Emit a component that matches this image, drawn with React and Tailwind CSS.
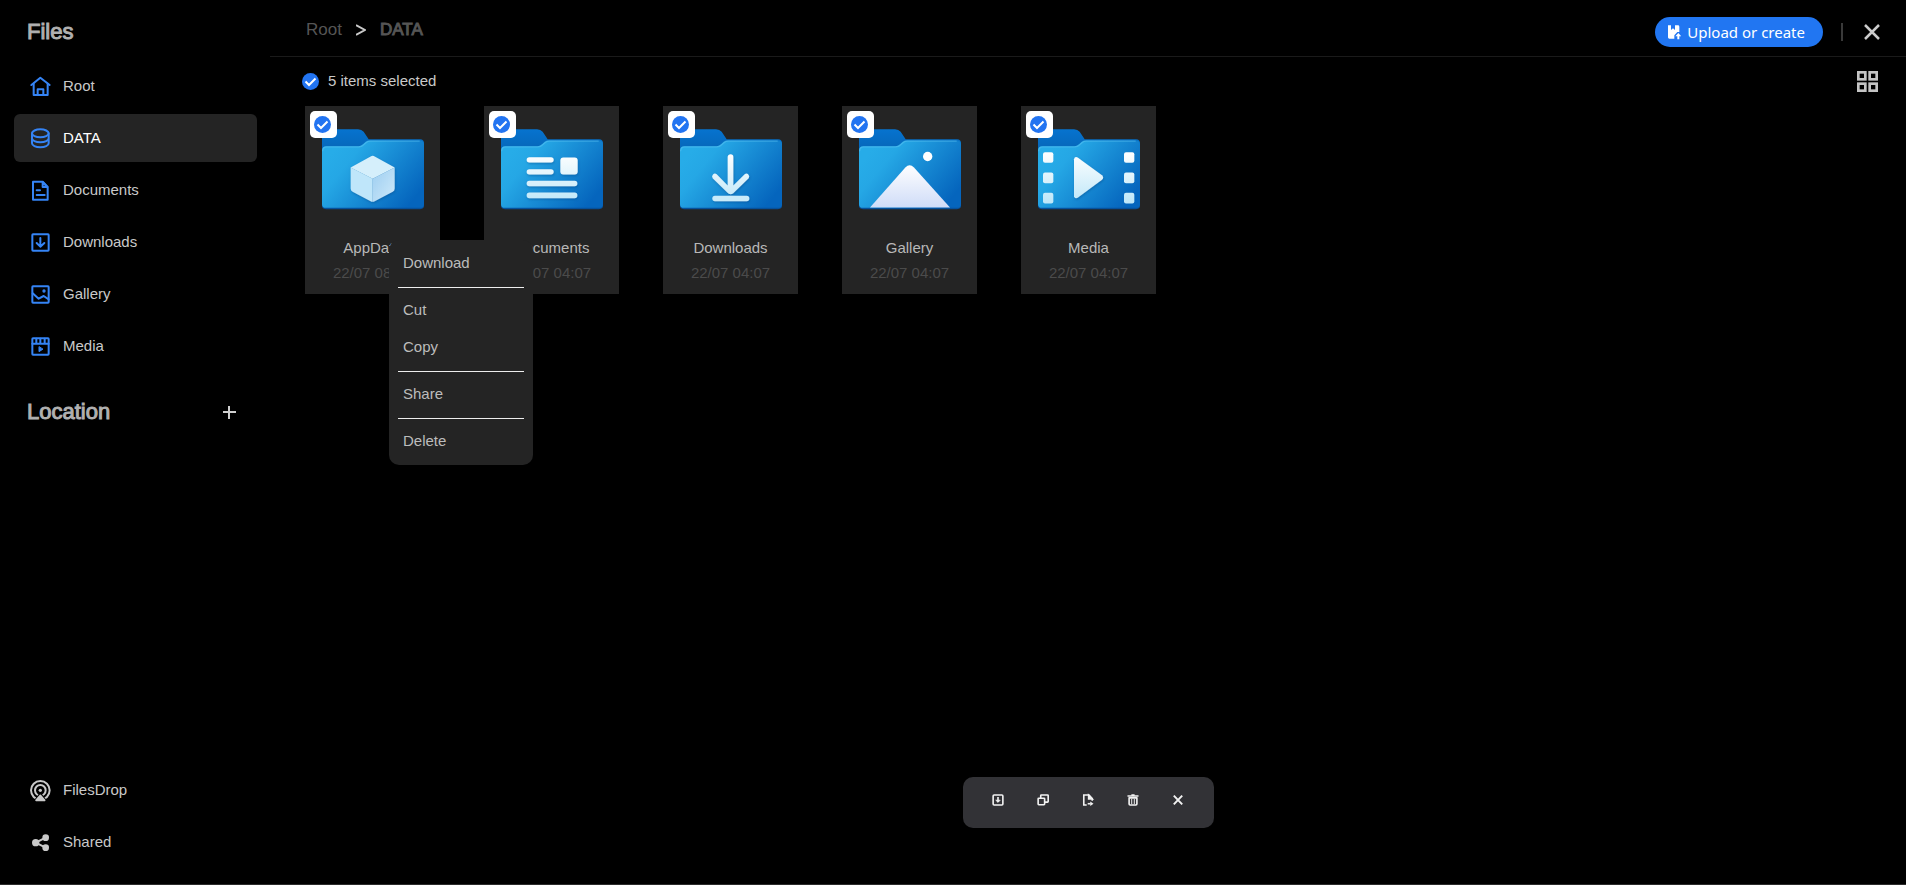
import React, { useId } from "react";

function NavIcon({ name }) {
  const shapes = {
    root: (
      <>
        <path d="M4 27 31 5l28 22" />
        <path d="M11 23v34h42V23M23 57V40h17v17" />
      </>
    ),
    data: (
      <>
        <ellipse cx="31" cy="16" rx="25" ry="12" />
        <path d="M6 16v30c0 7 11 12 25 12s25-5 25-12V16M6 31c0 7 11 12 25 12s25-5 25-12" />
      </>
    ),
    documents: (
      <>
        <path d="M9 5h29l15 16v38H9z" />
        <path d="M38 6v15h14zM20 31h10M20 45h24" />
      </>
    ),
    downloads: (
      <>
        <rect x="7" y="7" width="49" height="49" rx="2" />
        <path d="M31 18v22M20 33l11 11 12-11" />
      </>
    ),
    gallery: (
      <>
        <rect x="7" y="7" width="49" height="49" rx="2" />
        <path d="m8 28 18 16 15-8 15 10" />
        <circle cx="42" cy="21" r="2" fill="currentColor" />
      </>
    ),
    media: (
      <>
        <rect x="7" y="7" width="49" height="49" rx="2" />
        <path d="M7 23h49M19 8v13M31 8v13M44 8v13" />
        <path d="M27 33v14l11-7z" fill="currentColor" strokeWidth="3" />
      </>
    ),
    filesdrop: (
      <>
        <circle cx="31" cy="31" r="28" />
        <circle cx="31" cy="31" r="16" />
        <circle cx="31" cy="31" r="5" fill="currentColor" stroke="none" />
        <path d="M31 36 56 68H6z" fill="#000" stroke="none" />
        <path d="m31 46 13 15H18z" fill="currentColor" strokeWidth="5" />
      </>
    ),
    shared: (
      <>
        <path d="M47 17 17 32l30 15" />
        <circle cx="17" cy="32" r="11" fill="currentColor" stroke="none" />
        <circle cx="47" cy="17" r="10" fill="currentColor" stroke="none" />
        <circle cx="47" cy="47" r="10" fill="currentColor" stroke="none" />
      </>
    ),
  };
  return (
    <svg viewBox="0 0 63 63" className="size-[21px] shrink-0 overflow-visible" fill="none" stroke="currentColor" strokeWidth="6" strokeLinecap="round" strokeLinejoin="round" aria-hidden="true">
      {shapes[name]}
    </svg>
  );
}

function NavItem({ icon, label, active, plain }) {
  return (
    <li>
      <button
        type="button"
        className={
          active
            ? "flex h-12 w-full items-center gap-3 rounded-md bg-[#242424] px-4 text-[15px] text-white"
            : "flex h-12 w-full items-center gap-3 rounded-md px-4 text-[15px] text-[#c9c9c9]"
        }
      >
        <span className={plain ? "text-[#c9c9c9]" : "text-[#3584f5]"}>
          <NavIcon name={icon} />
        </span>
        {label}
      </button>
    </li>
  );
}

function FolderIcon({ kind }) {
  const id = useId();
  const front = `${id}front`;
  const back = `${id}back`;
  const pale = `${id}pale`;
  const peak = `${id}peak`;
  const side = `${id}side`;
  const shade = `${id}shade`;
  return (
    <svg viewBox="0 0 306 242" className="h-[81px] w-[102px]" aria-hidden="true">
      <defs>
        <linearGradient id={front} x1="40" y1="60" x2="255" y2="235" gradientUnits="userSpaceOnUse">
          <stop offset="0" stopColor="#27ace8" />
          <stop offset="0.2" stopColor="#25a7e5" />
          <stop offset="1" stopColor="#0565bd" />
        </linearGradient>
        <linearGradient id={back} x1="0" y1="0" x2="0" y2="1">
          <stop offset="0" stopColor="#0673cf" />
          <stop offset="0.25" stopColor="#0667b9" />
          <stop offset="1" stopColor="#06509b" />
        </linearGradient>
        <linearGradient id={pale} x1="0" y1="70" x2="0" y2="225" gradientUnits="userSpaceOnUse">
          <stop offset="0" stopColor="#ffffff" />
          <stop offset="1" stopColor="#bce6f8" />
        </linearGradient>
        <linearGradient id={peak} x1="0" y1="105" x2="0" y2="236" gradientUnits="userSpaceOnUse">
          <stop offset="0" stopColor="#ffffff" />
          <stop offset="1" stopColor="#cfdcf8" />
        </linearGradient>
        <linearGradient id={side} x1="0" y1="0" x2="1" y2="1">
          <stop offset="0" stopColor="#9ccdf0" />
          <stop offset="1" stopColor="#cfeafa" />
        </linearGradient>
        <filter id={shade} x="-20%" y="-20%" width="140%" height="140%">
          <feDropShadow dx="2" dy="4" stdDeviation="3" floodColor="#034a8c" floodOpacity="0.45" />
        </filter>
      </defs>
      <path d="M0 12Q0 0 12 0h96q11 0 17 8l15 22h154q12 0 12 12v188q0 10-12 10H12q-12 0-12-10z" fill={`url(#${back})`} />
      <path d="M0 64q0-13 13-13h96q8 0 14-6l8-7q5-4 12-4h151q12 0 12 12v179q0 11-12 11H12q-12 0-12-11z" fill={`url(#${front})`} />
      <path d="M2 66q0-13 13-13h96q8 0 14-6l8-7q5-4 12-4h148" fill="none" stroke="#5cc4f3" strokeOpacity="0.5" strokeWidth="4" />
      {kind === "appdata" && (
        <g filter={`url(#${shade})`}>
          <path d="M146 82q6-4 12 0l60 33-66 34-66-34z" fill="#d5effb" />
          <path d="m86 115 66 34v69q-3 0-6-2l-54-28q-6-3-6-10z" fill="#bfe6fa" />
          <path d="m218 115-66 34v69q3 0 6-2l54-28q6-3 6-10z" fill={`url(#${side})`} />
        </g>
      )}
      {kind === "documents" && (
        <g fill={`url(#${pale})`} filter={`url(#${shade})`}>
          <rect x="77" y="84" width="81" height="16" rx="8" />
          <rect x="77" y="120" width="81" height="16" rx="8" />
          <rect x="178" y="85" width="52" height="51" rx="9" />
          <rect x="77" y="155" width="152" height="16" rx="8" />
          <rect x="77" y="190" width="152" height="17" rx="8" />
        </g>
      )}
      {kind === "downloads" && (
        <g filter={`url(#${shade})`}>
          <path d="M160 83v86l34-34q6-4 11 1t1 11l-47 46q-7 5-14 0l-47-46q-4-6 1-11t11-1l33 34V83q1-8 9-8t8 8z" fill={`url(#${pale})`} />
          <rect x="97" y="200" width="111" height="16" rx="8" fill="#c9ebfa" />
        </g>
      )}
      {kind === "gallery" && (
        <g>
          <path d="M33 235 139 115q13-14 26 0l108 120z" fill={`url(#${peak})`} />
          <circle cx="206" cy="82" r="14" fill="#fff" />
        </g>
      )}
      {kind === "media" && (
        <g>
          <g fill={`url(#${pale})`}>
            <rect x="15" y="69" width="31" height="32" rx="6" />
            <rect x="15" y="130" width="31" height="32" rx="6" />
            <rect x="15" y="191" width="31" height="32" rx="6" />
            <rect x="258" y="69" width="31" height="32" rx="6" />
            <rect x="258" y="130" width="31" height="32" rx="6" />
            <rect x="258" y="191" width="31" height="32" rx="6" />
          </g>
          <path d="M108 90q2-9 11-5l73 53q7 7 0 14l-73 54q-9 4-11-5z" fill={`url(#${pale})`} filter={`url(#${shade})`} />
        </g>
      )}
    </svg>
  );
}

function CheckCircle({ label, id }) {
  return (
    <span className="grid size-[17px] shrink-0">
      <input id={id} type="checkbox" defaultChecked aria-label={label} className="col-start-1 row-start-1 size-[17px] appearance-none rounded-full bg-[#2274f1]" />
      <svg viewBox="0 0 34 34" className="pointer-events-none col-start-1 row-start-1 size-[17px]" fill="none" stroke="#fff" strokeWidth="4" aria-hidden="true">
        <path d="m7 17 7 7L27 11" />
      </svg>
    </span>
  );
}

const menuItem = "flex h-[37px] items-center px-[14px] text-left text-[15px] text-[#bcbcbc]";

function ContextMenu() {
  const rule = "mx-[9px] mt-[5px] mb-1 border-t border-[#eeeeee]";
  return (
    <div role="menu" className="absolute top-[134px] left-[84px] z-10 flex w-36 flex-col rounded-[10px] bg-[#242424] py-[5px]">
      <button type="button" role="menuitem" className={menuItem}>Download</button>
      <hr className={rule} />
      <button type="button" role="menuitem" className={menuItem}>Cut</button>
      <button type="button" role="menuitem" className={menuItem}>Copy</button>
      <hr className={rule} />
      <button type="button" role="menuitem" className={menuItem}>Share</button>
      <hr className={rule} />
      <button type="button" role="menuitem" className={menuItem}>Delete</button>
    </div>
  );
}

function FolderCard({ kind, name, date, children }) {
  return (
    <li className="relative flex h-[188px] w-[135px] flex-col items-center bg-[#242424] pt-[23px]">
      <span className="absolute top-[5px] left-[5px] flex size-[27px] items-center rounded-[5px] bg-white pl-1">
        <CheckCircle label={`Select ${name}`} />
      </span>
      <FolderIcon kind={kind} />
      <span className="mt-[25px] text-[15px] leading-[25px] text-[#b8b8b8]">{name}</span>
      <span className="text-[15px] leading-[25px] text-[#4b4b4b]">{date}</span>
      {children}
    </li>
  );
}

function ActionIcon({ name }) {
  const shapes = {
    download: (
      <>
        <rect x="3" y="3" width="30" height="31" rx="3" />
        <path d="M18 9v15" />
        <path d="M11 19h14l-7 7z" fill="currentColor" strokeWidth="2" />
      </>
    ),
    copy: (
      <>
        <rect x="3" y="13" width="20" height="20" rx="2" />
        <path d="M11 13V5q0-2 2-2h19q2 0 2 2v18q0 2-2 2h-9" />
      </>
    ),
    move: (
      <>
        <path d="M14 34H5V3h16l10 11v7" />
        <path d="M20 4v11h11z" fill="currentColor" />
        <path d="M17 30h9" />
        <path d="m25 23 10 7-10 7z" fill="currentColor" stroke="none" />
      </>
    ),
    trash: (
      <>
        <path d="M1 6h34M13 3h10M6 10v21q0 3 3 3h18q3 0 3-3V10M6 12h24" />
        <path d="M14 15v16M22 15v16" strokeWidth="3" />
      </>
    ),
    close: <path d="m5 5 26 27M31 5 5 32" strokeWidth="6" />,
  };
  return (
    <svg viewBox="0 0 36 37" className="size-3 overflow-visible" fill="none" stroke="currentColor" strokeWidth="5" aria-hidden="true">
      {shapes[name]}
    </svg>
  );
}

const places = [
  ["root", "Root"],
  ["data", "DATA"],
  ["documents", "Documents"],
  ["downloads", "Downloads"],
  ["gallery", "Gallery"],
  ["media", "Media"],
];

const folders = [
  ["appdata", "AppData", "22/07 08:07"],
  ["documents", "Documents", "22/07 04:07"],
  ["downloads", "Downloads", "22/07 04:07"],
  ["gallery", "Gallery", "22/07 04:07"],
  ["media", "Media", "22/07 04:07"],
];

const actions = [
  ["download", "Download"],
  ["copy", "Copy"],
  ["move", "Move"],
  ["trash", "Delete"],
  ["close", "Clear selection"],
];

const heading = "text-[22px] leading-7 text-[#b0b0b0] [-webkit-text-stroke:1px_currentColor]";

export default function App() {
  return (
    <div className="flex min-h-screen border-b border-[#2c2c2c] bg-black font-['Liberation_Sans',Arial,sans-serif] text-[#c9c9c9]">
      <aside className="flex w-[270px] shrink-0 flex-col pr-[13px] pb-[18px] pl-[14px]">
        <div className="px-[13px] pt-[18px]">
          <h1 className={heading}>Files</h1>
        </div>
        <nav className="mt-4" aria-label="Places">
          <ul className="flex flex-col gap-1">
            {places.map(([icon, label]) => (
              <NavItem key={icon} icon={icon} label={label} active={icon === "data"} />
            ))}
          </ul>
        </nav>
        <div className="mt-7 flex items-center justify-between px-[13px]">
          <h2 className={heading}>Location</h2>
          <button type="button" aria-label="Add location" className="mr-2 text-[#d0d0d0]">
            <svg viewBox="0 0 13 13" className="size-[13px]" stroke="currentColor" strokeWidth="2" aria-hidden="true">
              <path d="M6 0v13M0 6h13" />
            </svg>
          </button>
        </div>
        <ul className="mt-auto flex flex-col gap-1">
          <NavItem icon="filesdrop" label="FilesDrop" plain />
          <NavItem icon="shared" label="Shared" plain />
        </ul>
      </aside>

      <main className="relative flex min-w-0 flex-1 flex-col">
        <header className="flex h-[57px] items-center justify-between border-b border-[#1a1a1a] pt-1 pr-[26px] pl-9">
          <nav className="flex items-center gap-[14px] text-[17px] text-[#555555]" aria-label="Breadcrumb">
            <a href="#root">Root</a>
            <svg viewBox="0 0 10 12" className="h-3 w-[10px] text-[#c9c9c9]" fill="none" stroke="currentColor" strokeWidth="2" aria-hidden="true">
              <path d="m0 1 9 5-9 5" />
            </svg>
            <a href="#data" className="[-webkit-text-stroke:1px_currentColor]">DATA</a>
          </nav>
          <div className="flex items-center gap-[18px] pt-1">
            <button type="button" className="flex h-[30px] items-center gap-[6px] rounded-full bg-[#2176f2] pr-[18px] pl-[13px] font-['Noto_Sans','Open_Sans',sans-serif] text-[15px] text-white">
              <svg viewBox="0 0 39 45" className="h-[15px] w-[13px]" fill="currentColor" aria-hidden="true">
                <path d="M0 1h9v14l6-5 6 5V1h9q4 0 4 4v16h-6l-9 10v10H4q-4 0-4-4z" />
                <path d="m31 24 9 10h-6v9h-6v-9h-6z" />
              </svg>
              Upload or create
            </button>
            <span className="h-[18px] border-l-2 border-[#3a3a3a]" />
            <button type="button" aria-label="Close" className="ml-[3px] text-[#cccccc]">
              <svg viewBox="0 0 32 32" className="size-4" stroke="currentColor" strokeWidth="5" aria-hidden="true">
                <path d="m2 2 28 28M30 2 2 30" />
              </svg>
            </button>
          </div>
        </header>

        <div className="flex h-12 items-center justify-between pr-7 pl-8">
          <div className="flex items-center gap-[9px] text-[15px]">
            <CheckCircle id="select-all" />
            <label htmlFor="select-all">5 items selected</label>
          </div>
          <button type="button" aria-label="Grid view" className="text-[#c4c4c4]">
            <svg viewBox="0 0 63 63" className="size-[21px]" fill="none" stroke="currentColor" strokeWidth="8" aria-hidden="true">
              <rect x="4" y="4" width="21" height="21" />
              <rect x="38" y="4" width="21" height="21" />
              <rect x="4" y="38" width="21" height="21" />
              <rect x="38" y="38" width="21" height="21" />
            </svg>
          </button>
        </div>

        <ul className="flex flex-wrap gap-11 pt-px pr-7 pl-[35px]">
          {folders.map(([kind, name, date], index) => (
            <FolderCard key={kind} kind={kind} name={name} date={date}>
              {index === 0 && <ContextMenu />}
            </FolderCard>
          ))}
        </ul>

        <div className="absolute inset-x-0 bottom-14 flex justify-center">
          <div role="toolbar" aria-label="Selection actions" className="flex h-[51px] rounded-[10px] bg-[#323236] px-[13px] pb-[5px] text-[#f2f2f2]">
            {actions.map(([icon, label]) => (
              <button key={icon} type="button" aria-label={label} className="flex w-[45px] items-center justify-center">
                <ActionIcon name={icon} />
              </button>
            ))}
          </div>
        </div>
      </main>
    </div>
  );
}
